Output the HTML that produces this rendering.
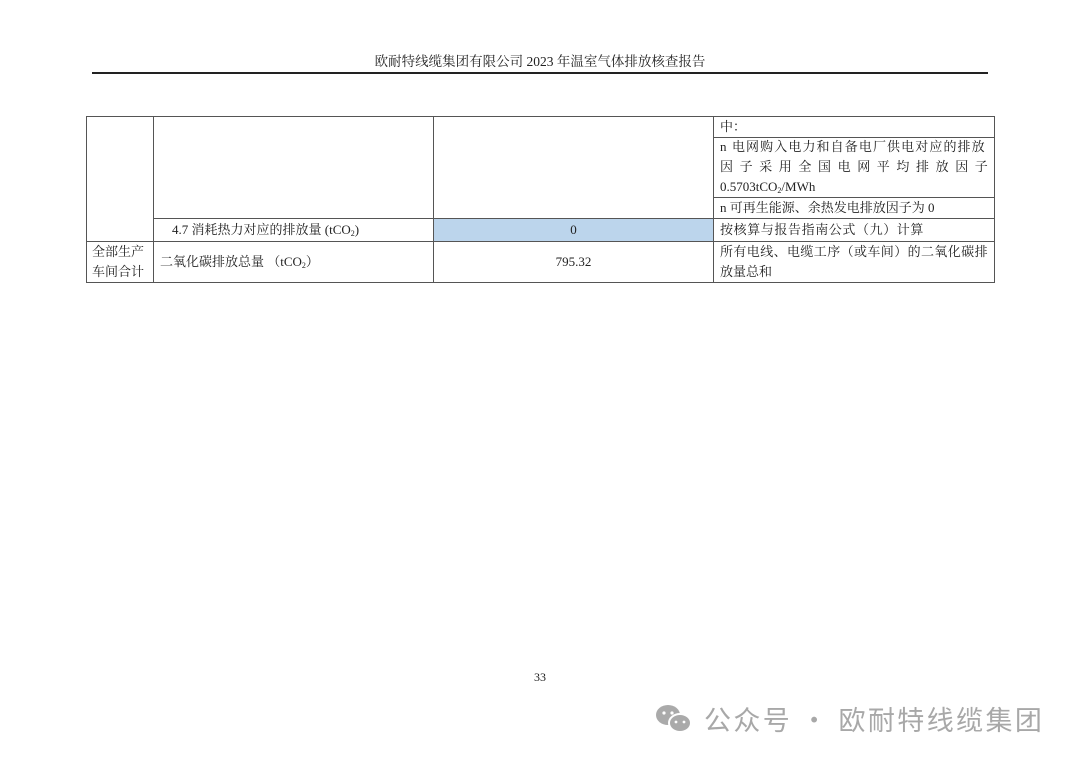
<!DOCTYPE html>
<html><head><meta charset="utf-8"><style>
body{margin:0;width:1080px;height:764px;background:#fff;position:relative;overflow:hidden;font-family:"Liberation Serif","Noto Serif CJK SC",serif;color:#222;}
.a{position:absolute;}
.ln{position:absolute;background:#555;height:1px;}
.vl{position:absolute;background:#555;width:1px;}
.t{position:absolute;font-size:13px;white-space:nowrap;line-height:20px;}
sub{font-size:8px;vertical-align:-2px;line-height:0;}
</style></head><body>
<div class="t" style="left:0;width:1080px;text-align:center;top:52px;font-size:13.5px;">欧耐特线缆集团有限公司 2023 年温室气体排放核查报告</div>
<div class="a" style="left:92px;top:72px;width:896px;height:2px;background:#222;"></div>

<div class="a" style="left:434px;top:219px;width:279px;height:22px;background:#bcd5ec;"></div>
<div class="ln" style="left:86px;top:116px;width:909px;"></div>
<div class="ln" style="left:713px;top:137px;width:282px;"></div>
<div class="ln" style="left:713px;top:197px;width:282px;"></div>
<div class="ln" style="left:153px;top:218px;width:842px;"></div>
<div class="ln" style="left:86px;top:241px;width:909px;"></div>
<div class="ln" style="left:86px;top:282px;width:909px;"></div>
<div class="vl" style="left:86px;top:116px;height:167px;"></div>
<div class="vl" style="left:153px;top:116px;height:167px;"></div>
<div class="vl" style="left:433px;top:116px;height:167px;"></div>
<div class="vl" style="left:713px;top:116px;height:167px;"></div>
<div class="vl" style="left:994px;top:116px;height:167px;"></div>

<div class="t" style="left:720px;top:117px;">中：</div>
<div class="t" style="left:720px;top:137px;letter-spacing:1.1px;">n 电网购入电力和自备电厂供电对应的排放</div>
<div class="t" style="left:720px;top:157px;letter-spacing:6.6px;">因子采用全国电网平均排放因子</div>
<div class="t" style="left:720px;top:177px;">0.5703tCO<sub>2</sub>/MWh</div>
<div class="t" style="left:720px;top:198px;">n 可再生能源、余热发电排放因子为 0</div>
<div class="t" style="left:720px;top:220px;letter-spacing:0.6px;">按核算与报告指南公式（九）计算</div>
<div class="t" style="left:720px;top:242px;letter-spacing:0.4px;">所有电线、电缆工序（或车间）的二氧化碳排</div>
<div class="t" style="left:720px;top:262px;">放量总和</div>

<div class="t" style="left:172px;top:220px;">4.7 消耗热力对应的排放量 (tCO<sub>2</sub>)</div>
<div class="t" style="left:434px;width:279px;text-align:center;top:220px;">0</div>
<div class="t" style="left:92px;top:242px;">全部生产</div>
<div class="t" style="left:92px;top:262px;">车间合计</div>
<div class="t" style="left:160px;top:252px;">二氧化碳排放总量 （tCO<sub>2</sub>）</div>
<div class="t" style="left:434px;width:279px;text-align:center;top:252px;">795.32</div>

<div class="t" style="left:0;width:1080px;text-align:center;top:667px;font-size:12px;">33</div>

<svg class="a" style="left:654px;top:703px" width="42" height="32" viewBox="0 0 42 32">
<ellipse cx="14" cy="12" rx="12" ry="10" fill="#aaa"/>
<ellipse cx="26" cy="20" rx="11" ry="9" fill="#aaa" stroke="#fff" stroke-width="2"/>
<circle cx="10" cy="10" r="1.6" fill="#fff"/><circle cx="18" cy="10" r="1.6" fill="#fff"/>
<circle cx="22" cy="19" r="1.4" fill="#fff"/><circle cx="30" cy="19" r="1.4" fill="#fff"/>
</svg>
<div class="t" style="left:704px;top:702px;font-size:27px;line-height:34px;letter-spacing:2.4px;color:#a8a8a8;font-family:'Noto Sans CJK SC',sans-serif;">公众号 · 欧耐特线缆集团</div>
</body></html>
